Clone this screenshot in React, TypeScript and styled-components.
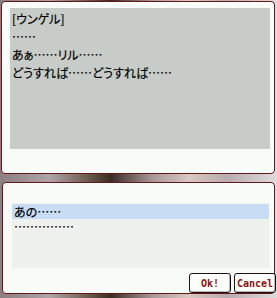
import React from "react";
import styled, { createGlobalStyle } from "styled-components";

const Global = createGlobalStyle`
  html, body { margin: 0; padding: 0; }
  body {
    width: 277px;
    height: 298px;
    overflow: hidden;
    background: linear-gradient(90deg, #8a7e80 0%, #b0a4a8 18%, #6a5a4e 32%, #3a2c22 40%, #a8989a 55%, #d8c8c0 68%, #b8acb0 82%, #e0dcdc 100%);
  }
`;

const Screen = styled.div`
  width: 277px;
  height: 298px;
  display: flex;
  flex-direction: column;
  gap: 8px;
  font-family: "Noto Sans CJK JP", "Noto Sans", sans-serif;
  font-feature-settings: "palt";
  font-size: 12px;
  color: #000000;
  -webkit-text-stroke: 0.2px #000000;
`;

const Window = styled.div<{ $h: number; $top: number; $left: number }>`
  box-sizing: border-box;
  height: ${(p) => p.$h}px;
  margin: ${(p) => p.$top}px 2px 0 ${(p) => p.$left}px;
  border: 1px solid #6a1418;
  border-radius: 4px;
  background: #f8fbf8;
  box-shadow: inset 0 0 0 1px #ffffff;
  display: flex;
  flex-direction: column;
`;

const MessageArea = styled.div`
  margin: 6px 4px 0 8px;
  height: 139px;
  background: #c8ccc8;
  padding: 2px 0 0 2px;
  line-height: 18px;
`;

const Line = styled.div`
  height: 18px;
  white-space: nowrap;
`;

const ListArea = styled.div`
  margin: 20px 5px 0 9px;
  height: 64px;
  background: #eef1ee;
  padding-top: 1px;
`;

const Row = styled.div<{ $selected?: boolean }>`
  height: ${(p) => (p.$selected ? 15 : 17)}px;
  line-height: 15px;
  padding-left: 2px;
  white-space: nowrap;
  overflow: hidden;
  background: ${(p) => (p.$selected ? "#c8dcf4" : "transparent")};
`;

const ButtonRow = styled.div`
  display: flex;
  justify-content: flex-end;
  gap: 3px;
  margin-top: 5px;
  margin-right: -2px;
`;

const Button = styled.button<{ $w: number }>`
  box-sizing: border-box;
  width: ${(p) => p.$w}px;
  height: 20px;
  padding: 0;
  border: 1px solid #1a1010;
  border-radius: 3px;
  background: #fbfdfb;
  box-shadow: inset -1px -1px 0 #b8b8b8, inset 1px 1px 0 #ffffff;
  font-family: "DejaVu Sans Mono", "Liberation Mono", monospace;
  font-size: 10px;
  font-weight: bold;
  letter-spacing: 0;
  color: #8a1414;
  -webkit-text-stroke: 0;
  display: flex;
  align-items: center;
  justify-content: center;
`;

export default function App() {
  return (
    <>
      <Global />
      <Screen>
        <Window $h={173} $top={1} $left={1}>
          <MessageArea>
            <Line>[ウンゲル]</Line>
            <Line>……</Line>
            <Line>あぁ……リル……</Line>
            <Line>どうすれば……どうすれば……</Line>
          </MessageArea>
        </Window>
        <Window $h={112} $top={0} $left={2}>
          <ListArea>
            <Row $selected>あの……</Row>
            <Row>……………</Row>
          </ListArea>
          <ButtonRow>
            <Button $w={42}>Ok!</Button>
            <Button $w={42}>Cancel</Button>
          </ButtonRow>
        </Window>
      </Screen>
    </>
  );
}
